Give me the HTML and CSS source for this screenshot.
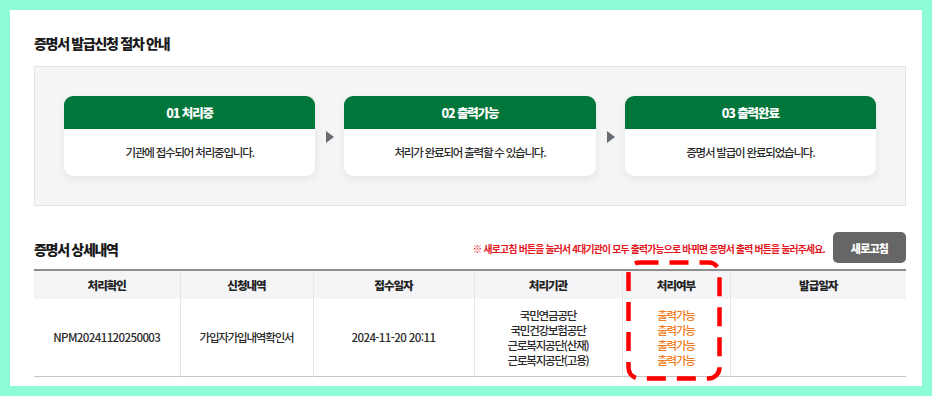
FILE: index.html
```html
<!DOCTYPE html>
<html lang="ko">
<head>
<meta charset="utf-8">
<title>증명서 발급신청</title>
<link rel="stylesheet" href="styles.css">
</head>
<body>
<div class="panel">
  <h2 class="title">증명서 발급신청 절차 안내</h2>
  <div class="steps">
    <div class="card">
      <div class="card-head">01 처리중</div>
      <div class="card-body">기관에 접수되어 처리중입니다.</div>
    </div>
    <div class="arrow"><span></span></div>
    <div class="card">
      <div class="card-head">02 출력가능</div>
      <div class="card-body">처리가 완료되어 출력할 수 있습니다.</div>
    </div>
    <div class="arrow"><span></span></div>
    <div class="card">
      <div class="card-head">03 출력완료</div>
      <div class="card-body">증명서 발급이 완료되었습니다.</div>
    </div>
  </div>

  <div class="detail-head">
    <h2 class="title">증명서 상세내역</h2>
    <div class="notice">※ 새로고침 버튼을 눌러서 4대기관이 모두 출력가능으로 바뀌면 증명서 출력 버튼을 눌러주세요.</div>
    <button class="refresh">새로고침</button>
  </div>

  <div class="table-wrap">
    <table class="grid">
      <colgroup>
        <col class="c1"><col class="c2"><col class="c3"><col class="c4"><col class="c5"><col class="c6">
      </colgroup>
      <thead>
        <tr>
          <th>처리확인</th>
          <th>신청내역</th>
          <th>접수일자</th>
          <th>처리기관</th>
          <th>처리여부</th>
          <th>발급일자</th>
        </tr>
      </thead>
      <tbody>
        <tr>
          <td class="num">NPM20241120250003</td>
          <td>가입자가입내역확인서</td>
          <td class="num">2024-11-20 20:11</td>
          <td class="multi">국민연금공단<br>국민건강보험공단<br>근로복지공단(산재)<br>근로복지공단(고용)</td>
          <td class="multi orange">출력가능<br>출력가능<br>출력가능<br>출력가능</td>
          <td></td>
        </tr>
      </tbody>
    </table>
    <svg class="highlight" width="96" height="121" viewBox="0 0 96 121">
      <rect x="2.5" y="2.5" width="91" height="116" rx="11" ry="11" fill="none" stroke="#ff0000" stroke-width="4.5" stroke-dasharray="19 11"/>
    </svg>
  </div>
</div>
</body>
</html>
```

FILE: styles.css
```css
* { box-sizing: border-box; }
html, body { margin: 0; padding: 0; }
body {
  background: #8ffcd9;
  padding: 10px;
  font-family: "Noto Sans CJK KR", "Noto Sans", sans-serif;
  color: #333;
}
.panel {
  background: #fff;
  width: 912px;
  height: 376px;
  padding: 23px 16px 8px 24px;
}
.title {
  margin: 0;
  font-size: 14px;
  line-height: 20px;
  font-weight: 900;
  color: #1a1a1a;
  letter-spacing: -1.3px;
}
.steps {
  margin-top: 13px;
  height: 140px;
  background: #f5f5f6;
  border: 1px solid #e3e3e5;
  padding: 29px 29px 29px 29px;
  display: flex;
}
.card {
  flex: 1;
  height: 80px;
  background: #fff;
  border-radius: 9px;
  overflow: hidden;
  box-shadow: 0 3px 8px rgba(0, 0, 0, 0.07);
  display: flex;
  flex-direction: column;
}
.card-head {
  height: 33px;
  background: #00763a;
  color: #fff;
  font-size: 12.5px;
  font-weight: 900;
  letter-spacing: -1.1px;
  display: flex;
  align-items: center;
  justify-content: center;
}
.card-body {
  flex: 1;
  display: flex;
  align-items: center;
  justify-content: center;
  font-size: 11.5px;
  font-weight: 500;
  letter-spacing: -1.2px;
  color: #2b2b2b;
  padding-bottom: 1px;
}
.arrow {
  width: 29px;
  display: flex;
  align-items: center;
  justify-content: center;
  padding-top: 1px;
}
.arrow span {
  width: 0;
  height: 0;
  border-top: 6.5px solid transparent;
  border-bottom: 6.5px solid transparent;
  border-left: 8px solid #676d73;
  margin-left: 1px;
}
.detail-head {
  margin-top: 26px;
  height: 31px;
  display: flex;
  align-items: center;
}
.detail-head .title { padding-top: 3px; }
.notice {
  margin-left: auto;
  font-size: 9.8px;
  font-weight: 700;
  color: #e5141b;
  letter-spacing: -0.75px;
  padding-top: 2px;
}
.refresh {
  margin-left: 8px;
  width: 73px;
  height: 31px;
  border: 0;
  border-radius: 5px;
  background: #666;
  color: #fff;
  font-family: inherit;
  font-size: 11px;
  font-weight: 900;
  letter-spacing: -0.8px;
  padding: 0;
}
.table-wrap {
  position: relative;
  margin-top: 6px;
  width: 872px;
}
.grid {
  width: 872px;
  border-collapse: collapse;
  table-layout: fixed;
  border-top: 2px solid #8e8e8e;
  border-bottom: 1px solid #c6c6c6;
}
.c1 { width: 146px; }
.c2 { width: 133px; }
.c3 { width: 161px; }
.c4 { width: 148px; }
.c5 { width: 108px; }
.c6 { width: 176px; }
.grid th {
  height: 29px;
  background: #f5f5f7;
  font-size: 11.5px;
  font-weight: 900;
  color: #222;
  letter-spacing: -1px;
  border-left: 1px solid #e6e6e8;
  padding: 0;
}
.grid td {
  height: 77px;
  font-size: 11.5px;
  font-weight: 500;
  color: #2b2b2b;
  letter-spacing: -1.2px;
  text-align: center;
  border-left: 1px solid #e6e6e8;
  padding: 1px 0 0;
  line-height: 15px;
}
.grid th:first-child, .grid td:first-child { border-left: 0; }
.grid td.num { letter-spacing: -0.6px; }
.grid td.orange { color: #f07c22; }
.highlight {
  position: absolute;
  left: 592px;
  top: -9px;
}
```
